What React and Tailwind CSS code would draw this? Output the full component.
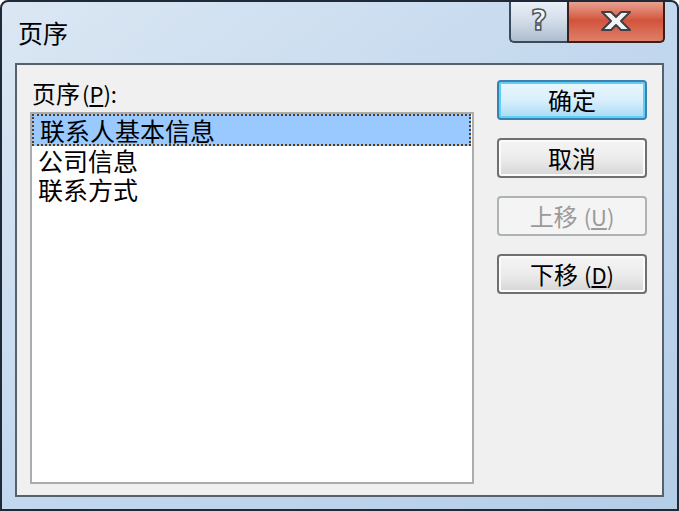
import React from "react";

const font = "font-['Noto_Sans_CJK_SC','Noto_Sans',sans-serif]";

// Win7 风格按钮
const DlgButton = ({ children, variant = "normal" }) => {
  const styles = {
    focus:
      "border-[#3c7fb1] bg-gradient-to-b from-[#eaf6fd] via-[#d9f0fc] to-[#a7d9f5] text-black shadow-[inset_0_0_0_2px_#5fd0f5]",
    normal:
      "border-[#707070] bg-gradient-to-b from-[#f4f4f4] via-[#ececec] to-[#d6d6d6] text-black shadow-[inset_0_0_0_2px_#fbfbfb]",
    disabled: "border-[#adb2b5] bg-[#f4f4f4] text-[#9a9a9a]",
  };
  return (
    <div
      className={`w-[150px] h-[40px] rounded-[4px] border-2 flex items-center justify-center text-[24px] leading-none ${styles[variant]}`}
    >
      {children}
    </div>
  );
};

const Mnemonic = ({ ch }) => (
  <span className="ml-[6px] text-[22px]">
    (<span className="underline underline-offset-2">{ch}</span>)
  </span>
);

export default function App() {
  const items = ["联系人基本信息", "公司信息", "联系方式"];

  return (
    <div
      className={`${font} w-[679px] h-[511px] overflow-hidden rounded-t-[8px] border-2 border-[#1f2a36] bg-gradient-to-br from-[#dbe7f3] via-[#c3d8ee] to-[#b4cde6] flex flex-col`}
    >
      {/* 标题栏 */}
      <div className="h-[61px] flex items-start shrink-0">
        <div className="pl-[16px] pt-[15px] text-[25px] leading-[30px] text-black">页序</div>
        <div className="ml-auto mr-[12px] flex h-[43px] -mt-[2px]">
          <div className="w-[58px] h-full rounded-bl-[5px] border-2 border-t-0 border-r-0 border-[#3b4a5a] bg-gradient-to-b from-[#edf2f8] via-[#d3dde9] to-[#aebdcf] flex items-center justify-center">
            <span className="text-[28px] font-bold leading-none text-[#f4f6f8] [-webkit-text-stroke:1.5px_#4a5560] font-['DejaVu_Sans',sans-serif]">
              ?
            </span>
          </div>
          <div className="w-[98px] h-full rounded-br-[5px] border-2 border-t-0 border-[#3b1f1a] bg-gradient-to-b from-[#eaa89a] via-[#d2533b] to-[#de7f6a] flex items-center justify-center">
            <svg width="34" height="22" viewBox="0 0 34 22">
              <path
                d="M3 2 H12 L17 7 L22 2 H31 L22 11 L31 20 H22 L17 15 L12 20 H3 L12 11 Z"
                fill="#f3f3f3"
                stroke="#3f3f46"
                strokeWidth="2"
                strokeLinejoin="round"
              />
            </svg>
          </div>
        </div>
      </div>

      {/* 客户区 */}
      <div className="ml-[13px] w-[649px] h-[434px] border-2 border-[#56616c] bg-[#f0f0f0] flex shrink-0">
        <div className="pl-[13px] flex flex-col">
          <div className="pt-[13px] pl-[2px] h-[47px] text-[24px] leading-[30px] text-black flex items-start">
            页序<span className="text-[22px] ml-[2px]">(<span className="underline underline-offset-2">P</span>):</span>
          </div>
          <div className="w-[444px] h-[372px] border-2 border-[#acacac] bg-white">
            {items.map((t, i) => (
              <div
                key={t}
                className={`h-[29px] pl-[6px] text-[25px] leading-[28px] text-black ${
                  i === 0 ? "bg-[#99c9ff] border-2 border-dotted border-[#5a3b1c] h-[32px] pl-[4px] mr-[1px] leading-[27px]" : ""
                }`}
              >
                {t}
              </div>
            ))}
          </div>
        </div>

        <div className="ml-[23px] pt-[15px] flex flex-col gap-[18px]">
          <DlgButton variant="focus">确定</DlgButton>
          <DlgButton>取消</DlgButton>
          <DlgButton variant="disabled">
            上移<Mnemonic ch="U" />
          </DlgButton>
          <DlgButton>
            下移<Mnemonic ch="D" />
          </DlgButton>
        </div>
      </div>
    </div>
  );
}
